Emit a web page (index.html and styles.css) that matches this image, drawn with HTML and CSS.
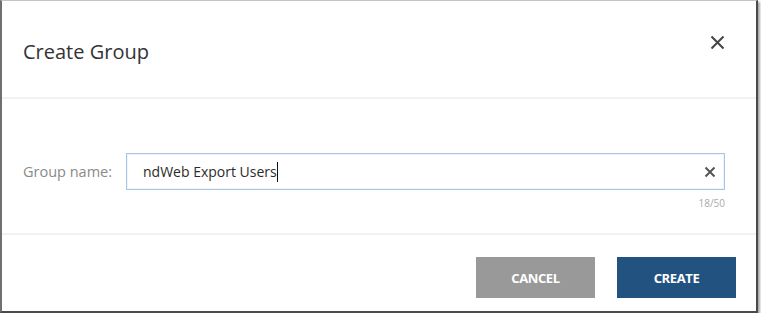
FILE: index.html
```html
<!DOCTYPE html>
<html lang="en">

<head>
    <meta charset="UTF-8">
    <meta name="viewport" content="width=device-width, initial-scale=1.0">
    <title>Create Group</title>
    <link rel="stylesheet" href="styles.css">
</head>

<body>
    <div class="dialog">
        <div class="dialog-header">
            <h2>Create Group</h2>
            <button class="close-btn" aria-label="Close">
                <svg width="15" height="15" viewBox="0 0 15 15">
                    <path d="M1.5 1.5 L13.5 13.5 M13.5 1.5 L1.5 13.5" stroke="#444" stroke-width="2" fill="none"/>
                </svg>
            </button>
        </div>

        <div class="dialog-body">
            <div class="field-row">
                <label class="field-label">Group name:</label>
                <div class="field">
                    <div class="text-input">
                        <span class="value">ndWeb Export Users</span><span class="caret"></span>
                        <svg class="clear-icon" width="12" height="12" viewBox="0 0 12 12">
                            <path d="M1.5 1.5 L10.5 10.5 M10.5 1.5 L1.5 10.5" stroke="#555" stroke-width="2" fill="none"/>
                        </svg>
                    </div>
                    <div class="counter">18/50</div>
                </div>
            </div>
        </div>

        <div class="dialog-footer">
            <button class="btn btn-cancel">CANCEL</button>
            <button class="btn btn-create">CREATE</button>
        </div>
    </div>
</body>

</html>
```

FILE: styles.css
```css
body {
    margin: 0;
    padding: 0;
    background-color: #fff;
    font-family: 'Open Sans', sans-serif;
}

.dialog {
    box-sizing: border-box;
    width: 758px;
    height: 313px;
    background-color: #fff;
    border-top: 1px solid #c4c4c4;
    border-left: 2px solid #707070;
    border-right: 2px solid #4a4a4a;
    border-bottom: 2px solid #4a4a4a;
    box-shadow: 2px 2px 2px rgba(0, 0, 0, 0.35);
    display: flex;
    flex-direction: column;
}

.dialog-header {
    height: 96px;
    display: flex;
    align-items: center;
    justify-content: space-between;
    padding: 0 31px 0 21px;
    border-bottom: 2px solid #f2f2f2;
}

.dialog-header h2 {
    margin: 0;
    font-size: 20px;
    font-weight: 400;
    color: #333;
    position: relative;
    top: 2px;
}

.close-btn {
    background: none;
    border: none;
    padding: 0;
    cursor: pointer;
    display: flex;
    position: relative;
    top: -7px;
}

.dialog-body {
    height: 136px;
    padding: 0 31px 0 21px;
    border-bottom: 2px solid #f2f2f2;
    box-sizing: border-box;
}

.field-row {
    display: flex;
    align-items: flex-start;
    margin-top: 54px;
}

.field-label {
    width: 103px;
    font-size: 14.5px;
    color: #8a8a8a;
    line-height: 37px;
}

.field {
    flex: 1;
}

.text-input {
    box-sizing: border-box;
    height: 37px;
    border: 1px solid #a9c5e3;
    box-shadow: inset 0 0 0 1px #eef4fb;
    display: flex;
    align-items: center;
    padding: 0 8px 0 16px;
    font-size: 14px;
    color: #2b2b2b;
}

.caret {
    display: inline-block;
    width: 1px;
    height: 20px;
    background-color: #111;
}

.clear-icon {
    margin-left: auto;
}

.counter {
    text-align: right;
    font-size: 10px;
    color: #aaa;
    margin-top: 6px;
}

.dialog-footer {
    flex: 1;
    display: flex;
    justify-content: flex-end;
    align-items: flex-start;
    gap: 22px;
    padding: 22px 20px 0 0;
}

.btn {
    width: 119px;
    height: 41px;
    border: none;
    color: #fff;
    font-family: 'Open Sans', sans-serif;
    font-size: 13px;
    font-weight: 700;
    letter-spacing: -0.4px;
    cursor: pointer;
}

.btn-cancel {
    background-color: #999;
}

.btn-create {
    background-color: #22527f;
}
```
